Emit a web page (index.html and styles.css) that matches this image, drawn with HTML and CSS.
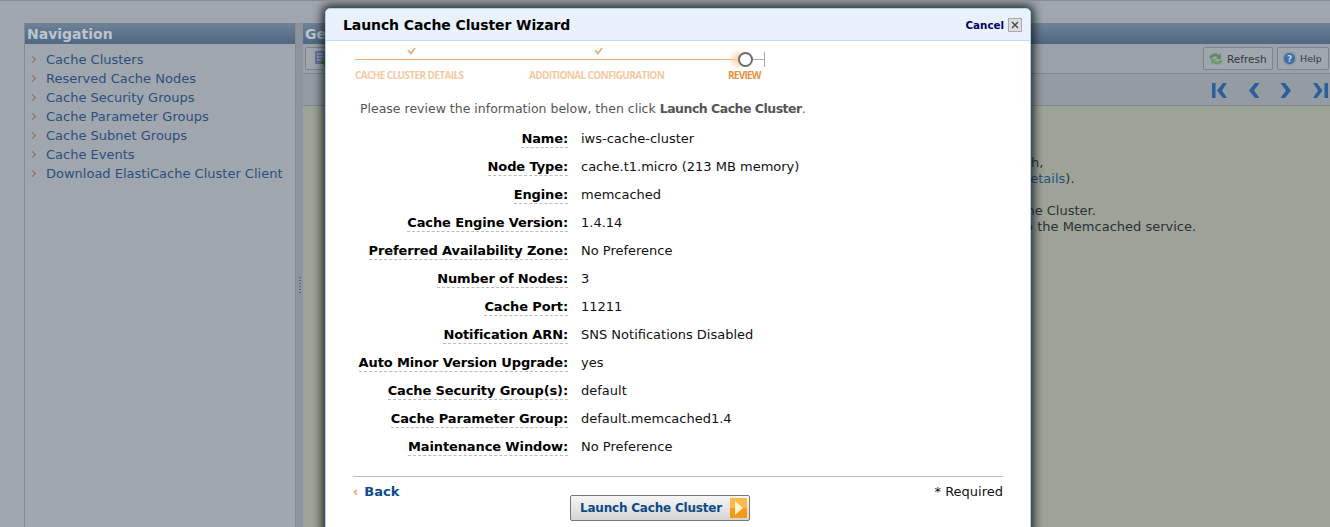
FILE: index.html
```html
<!DOCTYPE html>
<html lang="en">
<head>
<meta charset="utf-8">
<title>Launch Cache Cluster Wizard</title>
<link rel="stylesheet" href="styles.css">
</head>
<body>
<div class="page">
  <aside class="nav">
    <h2 class="panel-title">Navigation</h2>
    <ul class="nav-list">
      <li>Cache Clusters</li>
      <li>Reserved Cache Nodes</li>
      <li>Cache Security Groups</li>
      <li>Cache Parameter Groups</li>
      <li>Cache Subnet Groups</li>
      <li>Cache Events</li>
      <li>Download ElastiCache Cluster Client</li>
    </ul>
  </aside>
  <div class="gutter"><span class="grip"></span></div>
  <main class="main">
    <h2 class="panel-title">Get</h2>
    <div class="toolbar">
      <button class="tool tool-launch">
        <svg width="18" height="18" viewBox="0 0 18 18"><rect x="2" y="1" width="10" height="13" rx="1" fill="#68739b"/><path d="M4 4h6M4 7h6M4 10h4" stroke="#b9bdcb" stroke-width="1"/><path d="M11 8h3v3h3v3h-3v3h-3v-3H8v-3h3z" fill="#2f7d32"/></svg>
      </button>
      <div class="tool-right">
        <button class="tool tool-refresh">
          <svg width="16" height="16" viewBox="0 0 16 16"><path d="M1 7c1-4 6-6 10-3l2-2v6H8l1.500-2C7.500 5 5 5.500 4 7.500z" fill="#5f8a62"/><path d="M15 9c-1 4-6 6-10 3l-2 2V8h5l-1.500 2c2 1 4.500.500 5.500-1.500z" fill="#6f9a6a"/></svg>
          Refresh
        </button>
        <button class="tool tool-help">
          <svg width="15" height="15" viewBox="0 0 15 15"><circle cx="7.500" cy="7.500" r="7" fill="#8d97a3"/><circle cx="7.500" cy="7.500" r="5.500" fill="#3f6ea6"/><text x="7.500" y="10.500" class="help-mark">?</text></svg>
          Help
        </button>
      </div>
    </div>
    <div class="pager">
      <svg width="16" height="15" viewBox="0 0 16 15"><path d="M0 0h3.500v15H0zM11 0l4 0-5 7.500 5 7.500h-4L5 7.500z" fill="#2a5f9c"/></svg>
      <svg width="12" height="15" viewBox="0 0 12 15"><path d="M7 0h4.500L6 7.500l5.500 7.500H7L1 7.500z" fill="#2a5f9c"/></svg>
      <svg width="12" height="15" viewBox="0 0 12 15"><path d="M5 0H.5L6 7.500.5 15H5l6-7.500z" fill="#2a5f9c"/></svg>
      <svg width="16" height="15" viewBox="0 0 16 15"><path d="M16 0h-3.500v15H16zM5 0H1l5 7.500L1 15h4l5.500-7.500z" fill="#2a5f9c"/></svg>
    </div>
    <div class="content">
      <p class="bg-line line-a">h,</p>
      <p class="bg-line line-b"><span class="bg-link">details</span>).</p>
      <p class="bg-line line-c">Launch Cache Cluster.</p>
      <p class="bg-line line-d">to the Memcached service.</p>
    </div>
  </main>

  <section class="modal">
    <header class="modal-head">
      <h1 class="modal-title">Launch Cache Cluster Wizard</h1>
      <span class="cancel">Cancel</span>
      <span class="close">
        <svg width="8" height="8" viewBox="0 0 8 8"><path d="M1 1l6 6M7 1L1 7" stroke="#444" stroke-width="1.300"/></svg>
      </span>
    </header>

    <div class="stepper">
      <div class="step step-one">
        <svg class="check" width="9" height="7" viewBox="0 0 9 7"><path d="M0 2l2 0 2 2 3-4h2L4 7z" fill="#e8ad78"/></svg>
        <span class="step-label">CACHE CLUSTER DETAILS</span>
      </div>
      <div class="step step-two">
        <svg class="check" width="9" height="7" viewBox="0 0 9 7"><path d="M0 2l2 0 2 2 3-4h2L4 7z" fill="#e8ad78"/></svg>
        <span class="step-label">ADDITIONAL CONFIGURATION</span>
      </div>
      <div class="step step-three">
        <span class="knob"></span>
        <span class="step-label step-current">REVIEW</span>
      </div>
      <span class="line-end"></span>
    </div>

    <p class="intro">Please review the information below, then click <b>Launch Cache Cluster</b>.</p>

    <dl class="review">
      <div class="row"><dt><span>Name:</span></dt><dd>iws-cache-cluster</dd></div>
      <div class="row"><dt><span>Node Type:</span></dt><dd>cache.t1.micro (213 MB memory)</dd></div>
      <div class="row"><dt><span>Engine:</span></dt><dd>memcached</dd></div>
      <div class="row"><dt><span>Cache Engine Version:</span></dt><dd>1.4.14</dd></div>
      <div class="row"><dt><span>Preferred Availability Zone:</span></dt><dd>No Preference</dd></div>
      <div class="row"><dt><span>Number of Nodes:</span></dt><dd>3</dd></div>
      <div class="row"><dt><span>Cache Port:</span></dt><dd>11211</dd></div>
      <div class="row"><dt><span>Notification ARN:</span></dt><dd>SNS Notifications Disabled</dd></div>
      <div class="row"><dt><span>Auto Minor Version Upgrade:</span></dt><dd>yes</dd></div>
      <div class="row"><dt><span>Cache Security Group(s):</span></dt><dd>default</dd></div>
      <div class="row"><dt><span>Cache Parameter Group:</span></dt><dd>default.memcached1.4</dd></div>
      <div class="row"><dt><span>Maintenance Window:</span></dt><dd>No Preference</dd></div>
    </dl>

    <footer class="modal-foot">
      <div class="foot-top">
        <span class="back"><i class="back-arrow">‹</i>Back</span>
        <span class="required">* Required</span>
      </div>
      <div class="foot-action">
        <button class="launch"><span class="launch-text">Launch Cache Cluster</span>
          <span class="launch-icon"><svg width="8" height="14" viewBox="0 0 8 14"><path d="M0 0l8 7-8 7z" fill="#fff3d8"/></svg></span>
        </button>
      </div>
    </footer>
  </section>
</div>
</body>
</html>
```
FILE: styles.css
```css
* { box-sizing: border-box; }
html, body { margin: 0; height: 527px; overflow: hidden; }
body { font-family: "DejaVu Sans", Verdana, sans-serif; font-size: 13px; background: #9fa6ae; }
.page {
  position: relative;
  display: flex;
  height: 527px;
  padding: 23px 0 0 24px;
  border-top: 1px solid #868c94;
  background: #9fa6ae;
  overflow: hidden;
}
.panel-title {
  margin: 0;
  height: 21px;
  padding-left: 2px;
  font-size: 14px;
  line-height: 22px;
  font-weight: bold;
  color: #bcc3cc;
  background: linear-gradient(#6f8297, #4e6883);
  overflow: hidden;
  white-space: nowrap;
}
.nav {
  width: 272px;
  flex: none;
  margin-top: -1px;
  border-left: 1px solid #868c94;
  border-right: 1px solid #868c94;
  background: #9fa6ae;
}
.nav-list { margin: 0; padding: 6px 0 0 21px; list-style: none; color: #2e4f7c; }
.nav-list li { position: relative; height: 19px; line-height: 19px; white-space: nowrap; }
.nav-list li::before {
  content: "";
  position: absolute;
  left: -16px;
  top: 7px;
  width: 4px;
  height: 4px;
  border-top: 1px solid #8c6a60;
  border-right: 1px solid #8c6a60;
  transform: rotate(45deg);
}
.gutter { width: 7px; flex: none; margin-top: -1px; background: #8d949d; display: flex; align-items: center; justify-content: center; padding-top: 20px; }
.grip { width: 2px; height: 17px; background: repeating-linear-gradient(#5f656d 0 1px, transparent 1px 3px); }
.main { flex: 1; min-width: 0; margin-top: -1px; display: flex; flex-direction: column; }
.toolbar {
  height: 30px;
  padding: 3px 1px 3px 2px;
  display: flex;
  justify-content: space-between;
  background: #9aa1a9;
  border-bottom: 1px solid #7f868e;
}
.tool-right { display: flex; gap: 4px; }
.tool {
  display: flex;
  align-items: center;
  gap: 3px;
  height: 23px;
  padding: 0 0 0 4px;
  font: 10.500px "DejaVu Sans", sans-serif;
  color: #34393f;
  background: #9fa6ae;
  border: 1px solid #7d848c;
  border-radius: 2px;
  white-space: nowrap;
  overflow: hidden;
}
.tool-launch { width: 40px; padding-left: 7px; }
.tool-refresh { width: 70px; }
.tool-help { width: 52px; font-size: 9.500px; }
.help-mark { font: bold 9px "DejaVu Sans", sans-serif; fill: #c7d4e4; text-anchor: middle; }
.pager {
  height: 32px;
  padding: 9px 2px 0 0;
  display: flex;
  justify-content: flex-end;
  gap: 20px;
  background: #949ba3;
  border-bottom: 1px solid #7f868e;
}
.content { flex: 1; background: #9da397; padding-top: 49px; color: #2b3138; line-height: 16px; }
.bg-line { margin: 0; white-space: nowrap; }
.line-a { padding-left: 728px; }
.line-b { padding-left: 719px; }
.line-c { margin-top: 16px; padding-left: 648px; }
.line-d { padding-left: 717px; }
.bg-link { color: #2e4f7c; }

.modal {
  position: absolute;
  left: 325px;
  top: 7px;
  width: 706px;
  height: 560px;
  background: #fff;
  border: 1px solid #a9d0ef;
  border-radius: 5px 5px 0 0;
  box-shadow: 0 0 10px 3px rgba(20, 25, 25, .88);
}
.modal-head {
  display: flex;
  align-items: center;
  height: 32px;
  padding: 0 8px 0 17px;
  background: #e8f1fc;
  border-bottom: 1px solid #bfdcf3;
  border-radius: 4px 4px 0 0;
}
.modal-title { margin: 0; flex: 1; font-size: 14px; font-weight: bold; color: #000; letter-spacing: -.1px; }
.cancel { font-size: 10.300px; font-weight: bold; color: #000066; margin-right: 4px; }
.close {
  width: 14px;
  height: 14px;
  display: flex;
  align-items: center;
  justify-content: center;
  background: #ddd;
  border: 1px solid #aaa;
}
.stepper {
  display: flex;
  position: relative;
  width: 411px;
  height: 42px;
  margin-left: 29px;
}
.stepper::before {
  content: "";
  position: absolute;
  left: 0;
  right: 20px;
  top: 18px;
  height: 1px;
  background: #e7ad7d;
}
.line-end {
  position: absolute;
  left: 391px;
  top: 11px;
  width: 19px;
  height: 15px;
  border-right: 1px solid #aaa;
  background: linear-gradient(#aaa, #aaa) center / 100% 1px no-repeat;
}
.step { display: flex; flex-direction: column; flex: none; position: relative; }
.step-one { width: 174px; }
.step-two { width: 199px; }
.step-three { width: 38px; }
.check { position: absolute; top: 7px; }
.step-one .check { left: 52px; }
.step-two .check { left: 65px; }
.step-label {
  margin-top: 27px;
  font: bold 10px "Open Sans", sans-serif;
  line-height: 14px;
  letter-spacing: -.62px;
  color: #f5c9a0;
  white-space: nowrap;
}
.step-current { color: #e99242; letter-spacing: -.75px; }
.knob {
  position: absolute;
  left: 10px;
  top: 11px;
  width: 15px;
  height: 15px;
  z-index: 1;
  background: #fff;
  border: 2px solid #6b6b6b;
  border-radius: 50%;
  box-shadow: -7px 0 6px -1px #f6cfa8;
}
.intro { margin: 18px 0 0 34px; font-size: 12.500px; line-height: 16px; color: #555; }
.intro b { color: #555; letter-spacing: -.5px; }
.review { margin: 7px 0 0; }
.row { display: grid; grid-template-columns: 242px 1fr; column-gap: 13px; height: 28px; align-items: center; }
.row dt { text-align: right; font-weight: bold; color: #000; letter-spacing: -.12px; }
.row dt span { border-bottom: 1px dashed #bbb; padding-bottom: 1px; }
.row dd { margin: 0; color: #111; }
.modal-foot { margin: 16px 27px 0; border-top: 1px solid #bbb; }
.foot-top { display: flex; justify-content: space-between; padding-top: 7px; line-height: 16px; }
.back { font-weight: bold; color: #0b4d8c; }
.back-arrow { font-style: normal; color: #e8935a; margin: 0 6px 0 0; }
.required { color: #111; }
.foot-action { display: flex; margin-top: -5px; padding-left: 217px; }
.launch {
  display: flex;
  align-items: center;
  justify-content: space-between;
  width: 180px;
  height: 26px;
  padding: 0 2px 0 9px;
  font: bold 12px "DejaVu Sans", sans-serif;
  letter-spacing: -.2px;
  color: #0d4a86;
  background: linear-gradient(#f6f6f6, #d5d5d5);
  border: 1px solid #777;
  border-radius: 2px;
}
.launch-text { white-space: nowrap; }
.launch-icon {
  width: 17px;
  height: 20px;
  display: flex;
  align-items: center;
  justify-content: center;
  background: linear-gradient(#fdb84a 50%, #f59c10 50%);
}
```
